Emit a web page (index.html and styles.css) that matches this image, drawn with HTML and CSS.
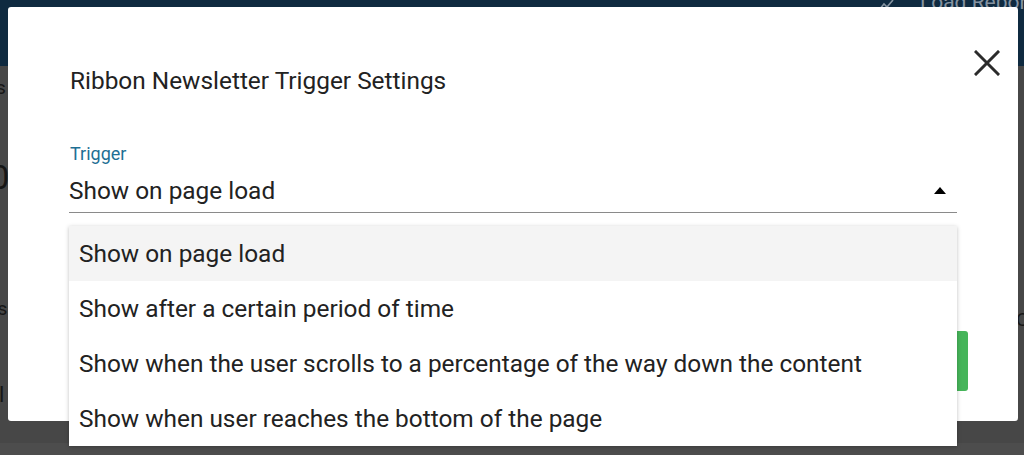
FILE: index.html
```html
<!DOCTYPE html>
<html lang="en">
<head>
    <meta charset="UTF-8">
    <meta name="viewport" content="width=device-width, initial-scale=1.0">
    <title>Ribbon Newsletter Trigger Settings</title>
    <link rel="stylesheet" href="styles.css">
</head>
<body>
    <div id="page">
        <div id="topbar">
            <span class="report-icon">
                <svg width="16" height="14" viewBox="0 0 16 14"><path d="M1 12 L6 6 L9 9 L15 2" fill="none" stroke="#8593a0" stroke-width="1.6"/></svg>
            </span>
            <span class="report">Load Report</span>
        </div>
        <div id="content">
            <div class="bg-row r1">Options</div>
            <div class="bg-row big r2">100</div>
            <div class="bg-row r3">Settings</div>
            <div class="bg-row r4">Il</div>
        </div>
        <div class="bg-right">Close</div>
        <div id="footer"></div>
    </div>

    <div id="modal">
        <button class="close" aria-label="Close">
            <svg width="26" height="26" viewBox="0 0 26 26"><path d="M2 2 L24 24 M24 2 L2 24" stroke="#2b2b2b" stroke-width="3" stroke-linecap="square"/></svg>
        </button>
        <h1 class="title">Ribbon Newsletter Trigger Settings</h1>

        <div class="field">
            <label class="label">Trigger</label>
            <div class="select">
                <span class="value">Show on page load</span>
                <span class="arrow"></span>
            </div>
            <ul class="menu">
                <li class="item active">Show on page load</li>
                <li class="item">Show after a certain period of time</li>
                <li class="item">Show when the user scrolls to a percentage of the way down the content</li>
                <li class="item">Show when user reaches the bottom of the page</li>
            </ul>
        </div>

        <button class="save">Save</button>
    </div>
</body>
</html>
```

FILE: styles.css
```css
html, body {
    margin: 0;
    height: 100%;
}
body {
    background: #474747;
    font-family: Roboto, "Liberation Sans", sans-serif;
    overflow: hidden;
}
#page {
    height: 455px;
    display: flex;
    flex-direction: column;
}
#topbar {
    height: 75px;
    background: #0f2a40;
    display: flex;
    justify-content: flex-end;
    align-items: flex-start;
    gap: 26px;
    margin-top: -9px;
    color: #8593a0;
    font-size: 21px;
    white-space: nowrap;
}
.report {
    margin-right: -10px;
    line-height: 22px;
}
.report-icon {
    padding-top: 2px;
}
#content {
    flex: 1;
    color: #161616;
}
.bg-row {
    white-space: nowrap;
}
.r1 {
    font-size: 19px;
    margin: 10px 0 0 -60px;
}
.r2 {
    font-size: 34px;
    margin: 58px 0 0 -48px;
}
.r3 {
    font-size: 19px;
    margin: 100px 0 0 -62px;
}
.r4 {
    font-size: 22px;
    margin: 62px 0 0 -7px;
}
.bg-right {
    position: absolute;
    left: 1016px;
    top: 308px;
    font-size: 19px;
    color: #161616;
}
#footer {
    height: 12px;
    background: #4d4d4d;
}

#modal {
    position: absolute;
    left: 8px;
    top: 7px;
    width: 1010px;
    height: 414px;
    box-sizing: border-box;
    background: #fff;
    border-radius: 3px;
    padding: 60px 61px 0 61px;
}
.close {
    position: absolute;
    right: 18px;
    top: 43px;
    background: none;
    border: none;
    padding: 0;
    width: 26px;
    height: 26px;
}
.title {
    margin: 0;
    font-size: 24.4px;
    font-weight: 400;
    line-height: 28px;
    color: #222;
    padding-left: 1px;
}
.field {
    position: relative;
    margin-top: 49px;
}
.label {
    display: block;
    font-size: 18px;
    line-height: 20px;
    color: #1e6f94;
    padding-left: 1px;
}
.select {
    display: flex;
    align-items: center;
    justify-content: space-between;
    height: 30px;
    margin-top: 11px;
    padding-bottom: 7px;
    border-bottom: 1px solid #8a8a8a;
}
.value {
    font-size: 24.4px;
    color: #222;
}
.arrow {
    width: 0;
    height: 0;
    border-left: 6.5px solid transparent;
    border-right: 6.5px solid transparent;
    border-bottom: 7px solid #000;
    margin-right: 11px;
}
.menu {
    position: absolute;
    left: 0;
    right: 0;
    top: 82px;
    margin: 0;
    padding: 0;
    list-style-type: none;
    background: #fff;
    box-shadow: 0 1px 4px rgba(0, 0, 0, 0.25);
    z-index: 2;
}
.item {
    height: 55px;
    line-height: 55px;
    padding-left: 10px;
    font-size: 24.4px;
    color: #222;
    white-space: nowrap;
}
.item.active {
    background: #f4f4f4;
}
.save {
    position: absolute;
    right: 50px;
    top: 324px;
    width: 120px;
    height: 60px;
    border: none;
    border-radius: 3px;
    background: #46b55a;
    color: #fff;
    font-size: 18px;
}
```
